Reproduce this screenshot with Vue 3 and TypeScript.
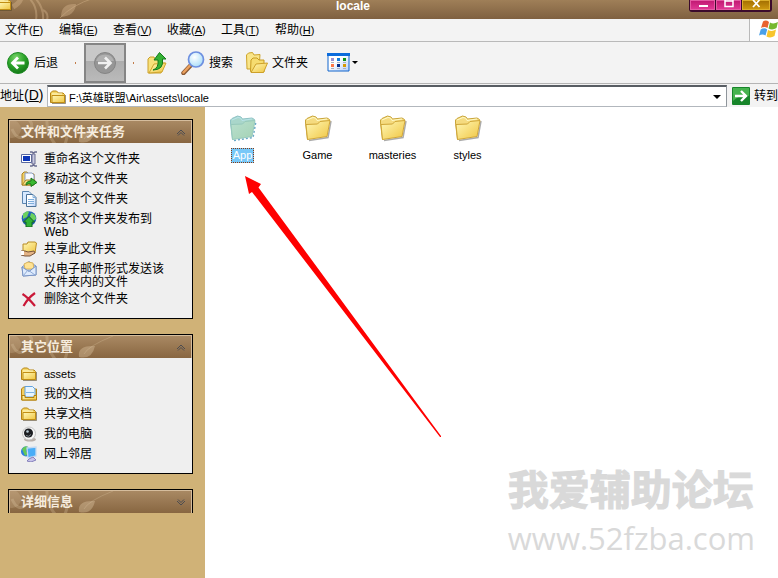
<script setup lang="ts">
import { ref } from 'vue'

interface Entry { icon: string; label: string }
interface Panel { title: string; open: boolean; entries: Entry[] }

const menus: [string, string][] = [
  ['文件', 'F'], ['编辑', 'E'], ['查看', 'V'], ['收藏', 'A'], ['工具', 'T'], ['帮助', 'H'],
]

const panels = ref<Panel[]>([
  {
    title: '文件和文件夹任务',
    open: true,
    entries: [
      { icon: 'rename', label: '重命名这个文件夹' },
      { icon: 'move', label: '移动这个文件夹' },
      { icon: 'copy', label: '复制这个文件夹' },
      { icon: 'publish', label: '将这个文件夹发布到 Web' },
      { icon: 'share', label: '共享此文件夹' },
      { icon: 'mail', label: '以电子邮件形式发送该文件夹内的文件' },
      { icon: 'delete', label: '删除这个文件夹' },
    ],
  },
  {
    title: '其它位置',
    open: true,
    entries: [
      { icon: 'folder', label: 'assets' },
      { icon: 'docs', label: '我的文档' },
      { icon: 'folder', label: '共享文档' },
      { icon: 'computer', label: '我的电脑' },
      { icon: 'network', label: '网上邻居' },
    ],
  },
  { title: '详细信息', open: false, entries: [] },
])

const folders = ['App', 'Game', 'masteries', 'styles']
const selected = ref('App')
const path = ref('F:\\英雄联盟\\Air\\assets\\locale')

const isLatin = (label: string) => /^[a-z]+$/i.test(label)
</script>

<template>
  <div class="window">
    <svg class="defs" width="0" height="0" aria-hidden="true">
      <defs>
        <linearGradient id="gold" x1="0" y1="0" x2="1" y2="1">
          <stop offset="0" stop-color="#fff8b8" /><stop offset="1" stop-color="#f0c540" />
        </linearGradient>
        <linearGradient id="teal" x1="0" y1="0" x2="1" y2="1">
          <stop offset="0" stop-color="#b9e0cf" /><stop offset="1" stop-color="#a4d2b4" />
        </linearGradient>
        <radialGradient id="green" cx=".4" cy=".25" r=".8">
          <stop offset="0" stop-color="#7bd46c" /><stop offset=".5" stop-color="#2ca52a" /><stop offset="1" stop-color="#117315" />
        </radialGradient>
        <radialGradient id="lens" cx=".4" cy=".35" r=".7">
          <stop offset="0" stop-color="#ffffff" /><stop offset="1" stop-color="#a5dcf8" />
        </radialGradient>
        <linearGradient id="sheet" x1="0" y1="0" x2="1" y2="1">
          <stop offset=".4" stop-color="#ffffff" /><stop offset="1" stop-color="#b5d0fa" />
        </linearGradient>
        <symbol id="small-folder" viewBox="0 0 16 16">
          <path d="M2 14.500h13.500V6" fill="none" stroke="#5a4a28" stroke-opacity=".6" />
          <path d="M.5 13.500V4l2-2h4l2 2H13l1.500 1.500v8z" fill="#f6d768" stroke="#b58412" />
          <path d="M2 6.500h12.500v7H2z" fill="url(#gold)" stroke="#c18e14" />
          <path d="M2 5h10" stroke="#fffbd0" />
        </symbol>
        <symbol id="big-folder" viewBox="0 0 28 28">
          <path d="M5 25.500l19-3L27 6" fill="none" stroke="#444" stroke-opacity=".45" stroke-width="1.500" />
          <path d="M3.500 24.500L1.500 8V5L3 3.500 8.500 1l3.500 1 1.500 2L23 3l2.500 1.500V6z" fill="#f5db80" stroke="#c9a53a" />
          <path d="M3 5l6-2.500 2.500.500 1.500 2.500 10-1.500" fill="none" stroke="#fffac8" />
          <path d="M3.500 24.500L2 9.500l11.500-.500L16 6.500l10-1-3 16z" fill="url(#gold)" stroke="#d0a637" />
        </symbol>
        <symbol id="big-folder-selected" viewBox="0 0 28 28">
          <path d="M5 25.500l19-3L27 6" fill="none" stroke="#6ba9c8" stroke-dasharray="2 2" stroke-width="1.500" />
          <path d="M3.500 24.500L1.500 8V5L3 3.500 8.500 1l3.500 1 1.500 2L23 3l2.500 1.500V6z" fill="#a9d6ca" stroke="#8fc3c6" />
          <path d="M3 5l6-2.500 2.500.500 1.500 2.500 10-1.500" fill="none" stroke="#b8e4ea" />
          <path d="M3.500 24.500L2 9.500l11.500-.500L16 6.500l10-1-3 16z" fill="url(#teal)" stroke="#97c9bb" />
        </symbol>
        <symbol id="swirl" viewBox="0 0 130 22">
          <g fill="none" stroke="#e9d2b0" stroke-opacity=".25" stroke-width="3">
            <path d="M2 8q6 14 15 5t1-15M37-2q-1 14 8 25M52 4q8 8 3 19" />
            <path d="M74 18q4-8 29-18" stroke-width="1" />
          </g>
          <path d="M69 21q-2-12 16-11-3 14-16 11z" fill="#e9d2b0" fill-opacity=".35" />
          <circle cx="2" cy="8" r="9" fill="#e9d2b0" fill-opacity=".2" />
        </symbol>
      </defs>
    </svg>

    <header class="title-bar">
      <svg class="title-art" viewBox="0 0 130 19" aria-hidden="true">
        <g fill="none" stroke="#d9b991" stroke-opacity=".4">
          <path d="M13 7Q20 3 21-2" stroke-width="5" />
          <path d="M30-1q8 9 6 21M36-1q8 9 7 21M47 20q2-7-4-10" stroke-width="2" />
          <path d="M60 18Q72 5 94-2" />
        </g>
        <path d="M61 17q0-14 15-13-1 12-15 13z" fill="#d9b991" fill-opacity=".4" />
      </svg>
      <svg class="title-icon" viewBox="0 0 16 16" aria-hidden="true"><use href="#small-folder" /></svg>
      <h1>locale</h1>
      <div class="window-buttons">
        <button aria-label="最小化"><svg viewBox="0 0 12 12"><path d="M2 6h9" stroke="#fff" stroke-width="2" /></svg></button>
        <button aria-label="最大化"><svg viewBox="0 0 12 12"><path d="M2 0v6.500h8V0M2 1h8" fill="none" stroke="#fff" stroke-width="1.500" /></svg></button>
        <button class="close" aria-label="关闭"><svg viewBox="0 0 12 12"><path d="M3 0l6.500 7M9.500 0L3 7" stroke="#fff" stroke-width="1.800" /></svg></button>
      </div>
    </header>

    <nav class="menu-bar">
      <button v-for="[label, key] in menus" :key="key">{{ label }}<span class="latin">(<u>{{ key }}</u>)</span></button>
      <span class="brand">
        <svg viewBox="0 0 20 20" aria-hidden="true">
          <path d="M5 2.500q3-2 6 .500L9.500 9q-3-2-6.500 0z" fill="#e8622f" />
          <path d="M12 3.500q3.500 2 8-.500L18.500 9q-4 2.500-8 .500z" fill="#76b82f" />
          <path d="M2.700 10.500q3.500-2.500 6.500 0L7.500 16.500q-3-2-6.500 0z" fill="#4aa0e8" />
          <path d="M10 11q4 2 8-.500L16.500 17q-4 2.500-8 .500z" fill="#f8c52c" />
        </svg>
      </span>
    </nav>

    <div class="tool-bar">
      <button class="tool">
        <svg class="i24" viewBox="0 0 24 24" aria-hidden="true">
          <circle cx="12" cy="12" r="10.500" fill="url(#green)" stroke="#1d8a23" />
          <path d="M18.500 12H7M12 6.500L6.500 12l5.500 5.500" fill="none" stroke="#fff" stroke-width="2.800" />
        </svg>后退
      </button>
      <i class="dot"></i>
      <button class="forward" aria-label="前进">
        <svg class="i24" viewBox="0 0 24 24" aria-hidden="true">
          <circle cx="12" cy="12" r="10.500" fill="#969696" stroke="#858585" />
          <path d="M3 10a9.500 9.500 0 0 1 18 0z" fill="#b0b0b0" />
          <path d="M5 12h12M12 6.500l5.500 5.500-5.500 5.500" fill="none" stroke="#f0f0f0" stroke-width="2.600" />
        </svg>
      </button>
      <i class="dot"></i>
      <button class="tool up" aria-label="向上">
        <svg class="i22" viewBox="0 0 22 24" aria-hidden="true">
          <path d="M2 22V8l2-2h4l1 2h7v4h3l-4 10z" fill="#f8e17a" stroke="#caa02a" />
          <path d="M3 22l5-9 12-1-4 9z" fill="url(#gold)" stroke="#d0a52e" />
          <path d="M7 19q6-2 5-10H8l5.500-7.500L20 8h-3.500Q18 19 7 19z" fill="#35b235" stroke="#147a1c" />
        </svg>
      </button>
      <button class="tool">
        <svg class="i24" viewBox="0 0 24 24" aria-hidden="true">
          <path d="M10 14l-7.500 8" stroke="#8b5a36" stroke-width="4.500" stroke-linecap="round" />
          <path d="M9.500 14l-7 7.500" stroke="#eca15d" stroke-width="2.500" stroke-linecap="round" />
          <circle cx="15" cy="8.500" r="7.500" fill="url(#lens)" stroke="#6d8fe0" stroke-width="1.700" />
        </svg>搜索
      </button>
      <button class="tool">
        <svg class="i22" viewBox="0 0 22 24" aria-hidden="true">
          <path d="M1 18L.5 4l2-2 4-.5L8 4l6-.5L13 18z" fill="#f9e589" stroke="#cda32b" />
          <path d="M4.500 20.500L5 9l2-2h4l2 2h5v12z" fill="#f6dc70" stroke="#c89b20" />
          <path d="M5 21.500l5-8.500 11.500-1-4 9.500z" fill="url(#gold)" stroke="#cda02a" />
        </svg>文件夹
      </button>
      <button class="tool views" aria-label="查看方式">
        <svg class="i24" viewBox="0 0 24 20" aria-hidden="true">
          <path d="M1 1h21v17H1z" fill="url(#sheet)" stroke="#1165cc" />
          <path d="M0 0h23v3H0z" fill="#0a6bdc" />
          <path d="M4 5h3v3H4z" fill="#9a8fd0" /><path d="M10 5h3v3h-3z" fill="#147edc" /><path d="M16 5h3v3h-3z" fill="#10921c" />
          <path d="M4 11h3v3H4z" fill="#ff7846" /><path d="M10 11h3v3h-3z" fill="#09318d" /><path d="M16 11h3v3h-3z" fill="#d69a05" />
          <path d="M4 9.500h3m3 0h3m3 0h3M4 15.500h3m3 0h3m3 0h3" stroke="#aab0bc" />
        </svg>
        <i class="caret"></i>
      </button>
    </div>

    <form class="address-bar" @submit.prevent>
      <label for="path">地址<span>(<u>D</u>)</span></label>
      <div class="combo">
        <svg class="i16" aria-hidden="true"><use href="#small-folder" /></svg>
        <input id="path" v-model="path" type="text" spellcheck="false" />
        <button class="drop" type="button" aria-label="展开"><i class="caret large"></i></button>
      </div>
      <button class="go" type="submit">
        <svg viewBox="0 0 18 18" aria-hidden="true">
          <rect width="18" height="18" rx="1" fill="#17852a" /><path d="M1 1h16v8Q9 7 1 14z" fill="#46b34e" />
          <path d="M3 9h11M9 4l5 5-5 5" fill="none" stroke="#fff" stroke-width="2.400" />
        </svg>转到
      </button>
    </form>

    <div class="body">
      <aside>
        <section v-for="panel in panels" :key="panel.title" class="panel" :class="{ closed: !panel.open }">
          <button class="panel-head" :aria-expanded="panel.open" @click="panel.open = !panel.open">
            <svg class="swirl" aria-hidden="true"><use href="#swirl" /></svg>
            <span>{{ panel.title }}</span>
            <svg class="chevron" viewBox="0 0 10 7" aria-hidden="true">
              <path :d="panel.open ? 'M1 5l4-4 4 4M2 6.500l3-3 3 3' : 'M1 2l4 4 4-4M2 .5l3 3 3-3'" fill="none" stroke="#4c4c50" />
            </svg>
          </button>
          <ul v-if="panel.open">
            <li v-for="entry in panel.entries" :key="entry.label">
              <a href="#">
                <svg class="i16" viewBox="0 0 16 16" aria-hidden="true">
                  <g v-if="entry.icon === 'rename'">
                    <path d="M.5 3.500h10v8H.5z" fill="#fff" stroke="#5868a0" /><path d="M2 5h7v5H2z" fill="#0c35b8" />
                    <path d="M9 1h2l1.500 1L14 1h2M12.500 1v14M9 15h2l1.500-1 1.500 1h2" fill="none" stroke="#6a6d91" stroke-width="1.500" />
                    <path d="M11 3h3v10h-3z" fill="#c9cbe2" stroke="#6a6d91" />
                  </g>
                  <g v-else-if="entry.icon === 'move'">
                    <path d="M1 14V3l2-2h3l2 2h5v11z" fill="#f3cf62" stroke="#ab8325" />
                    <path d="M4 2h7l2 2v8H4z" fill="#f7faff" stroke="#8b9cc0" /><path d="M1 14l4-5h9l-2 5z" fill="url(#gold)" stroke="#ab8325" />
                    <path d="M5 14q0-4 5-4V7l6 4.500-6 4V13q-3-1-5 1z" fill="#38b82f" stroke="#17731b" />
                  </g>
                  <g v-else-if="entry.icon === 'copy'">
                    <path d="M1.500 .5H8l3 3v9H1.500z" fill="#d7e9ff" stroke="#5c86b0" />
                    <path d="M5.500 3.500H12l3 3v9H5.500z" fill="url(#sheet)" stroke="#4c7298" />
                    <path d="M12 3.500v3h3M7 8.500h6m-6 2h6m-6 2h6" fill="none" stroke="#7faedb" />
                  </g>
                  <g v-else-if="entry.icon === 'publish'">
                    <circle cx="8" cy="7.500" r="7.300" fill="#2361b8" /><path d="M2 3q4-4 6-2l-2 5-4 2zM10 2q5 1 5 6l-3 2-3-4z" fill="#6bd15e" />
                    <path d="M8 5.500l5.500 5.500H11v5H5v-5H2.500z" fill="#31b336" stroke="#15661f" />
                  </g>
                  <g v-else-if="entry.icon === 'share'">
                    <path d="M2 11V3h4l1-2h7l1.500 1L14 12z" fill="url(#gold)" stroke="#b88c25" />
                    <path d="M0 10h4l3 1 6-1 1 2-5 3H4l-4-1z" fill="#e4b486" stroke="#76543c" /><path d="M0 10h3v4H0z" fill="#fff" />
                  </g>
                  <g v-else-if="entry.icon === 'mail'">
                    <path d="M1 6l7-5.500L15 5v9l-13 1z" fill="#b4cdf0" stroke="#7c96c4" />
                    <path d="M3 3l4-2 5 1 1 6H4z" fill="#ffe394" stroke="#d9b35c" />
                    <path d="M1 6l7 4.500L15 5v9L2 15z" fill="#deebfd" stroke="#7994c4" /><path d="M2 15l5-6 7 5" fill="none" stroke="#8eaad6" />
                  </g>
                  <path v-else-if="entry.icon === 'delete'" d="M1.500 3q5 3 12.500 12M14 2Q7 7 2.500 15" fill="none" stroke="#ca1838" stroke-width="2.200" />
                  <use v-else-if="entry.icon === 'folder'" href="#small-folder" />
                  <g v-else-if="entry.icon === 'docs'">
                    <path d="M.5 14V3l2-2H5l1 2h9.500v11z" fill="#f3cd5c" stroke="#b5830f" />
                    <path d="M4 .5h7.500L14 3v8H4z" fill="#e7f5ff" stroke="#61a2de" /><path d="M5 6.500h8" stroke="#81b6e5" />
                    <path d="M1 9.500h3v2h9v-2h2.500V14H1z" fill="url(#gold)" stroke="#b5830f" />
                  </g>
                  <g v-else-if="entry.icon === 'computer'">
                    <ellipse cx="9" cy="13.500" rx="6" ry="2" fill="#b8aea8" /><circle cx="8" cy="7.500" r="6.500" fill="#f5f5f5" stroke="#c4c4c4" />
                    <circle cx="7.500" cy="7" r="4.500" fill="#1c1e22" /><circle cx="6.500" cy="5.500" r="1.300" fill="#b6c8d3" /><path d="M5 9.500q3 2 5-1" fill="none" stroke="#7e8890" />
                  </g>
                  <g v-else>
                    <circle cx="5" cy="5.500" r="5" fill="#2c7de0" /><path d="M1 3q3-4 6-2L5 5l2 3-3 2z" fill="#63c957" />
                    <path d="M6 2l9-1v9l-8 2z" fill="#49adf7" stroke="#c4d9f2" stroke-width="1.300" /><path d="M8 13l4-2 3 3-5 2-4-1z" fill="#c8c4eb" stroke="#8580bb" />
                  </g>
                </svg>
                <span :class="{ latin: isLatin(entry.label) }">{{ entry.label }}</span>
              </a>
            </li>
          </ul>
        </section>
      </aside>

      <main>
        <div class="files">
          <button v-for="name in folders" :key="name" class="file" :class="{ selected: name === selected }" @click="selected = name">
            <svg aria-hidden="true"><use :href="name === selected ? '#big-folder-selected' : '#big-folder'" /></svg>
            <span class="latin">{{ name }}</span>
          </button>
        </div>
        <svg class="arrow" viewBox="0 0 197 262" aria-hidden="true">
          <path d="M0 0l16 8-2.500 3.500L196 260v1h-1L7 16l-3 2z" fill="#fe0000" />
        </svg>
        <div class="watermark">
          <p class="forum">我爱辅助论坛</p>
          <p class="site">www.52fzba.com</p>
        </div>
      </main>
    </div>
  </div>
</template>

<style>
body { margin: 0; }
#app { min-height: 100vh; display: flex; }
</style>

<style scoped>
.window { flex: 1; min-width: 0; display: flex; flex-direction: column; overflow: hidden; background: #f3f3f3; color: #000; font: 12px/16px "Liberation Sans", "Noto Sans CJK SC", sans-serif; }
.latin { font-size: 11px; }
.defs { position: absolute; }
svg { display: block; flex: none; }
button { border: 0; margin: 0; padding: 0; background: none; color: inherit; font: inherit; white-space: nowrap; }
.i16 { width: 16px; height: 16px; }
.i22 { width: 22px; height: 24px; }
.i24 { width: 24px; height: 24px; }

.title-bar { position: relative; height: 19px; background: linear-gradient(#9f7f58, #7f6040); }
.title-art { position: absolute; left: 0; top: 0; width: 130px; height: 19px; }
.title-icon { position: absolute; left: -4px; top: -4px; width: 16px; height: 16px; }
h1 { margin: 0; padding-right: 72px; text-align: center; font-size: 12px; line-height: 13px; color: #fff; }
.window-buttons { position: absolute; right: 6px; top: 0; display: flex; gap: 1px; padding: 0 2px 2px 1px; background: #3b0a2c; border-radius: 0 0 3px 3px; }
.window-buttons button { width: 25px; height: 10px; display: flex; justify-content: center; background: linear-gradient(#bf1770, #e23a96); box-shadow: inset 0 0 0 1px #e45ca4; }
.window-buttons .close { width: 28px; background: linear-gradient(#a06c00, #d09a10); box-shadow: inset 0 0 0 1px #dcae2c; }
.window-buttons svg { width: 12px; height: 12px; }

.menu-bar { display: flex; height: 22px; padding-left: 5px; border-bottom: 1px solid #b9b9b9; }
.menu-bar button { width: 54px; text-align: left; line-height: 22px; }
.brand { margin-left: auto; width: 20px; padding-left: 8px; border-left: 1px solid #b9b9b9; background: #fff; }
.brand svg { width: 20px; height: 20px; }

.tool-bar { display: flex; align-items: center; height: 41px; padding-left: 6px; border-bottom: 1px solid #b4b4b4; }
.tool { display: flex; align-items: center; gap: 4px; margin-right: 13px; }
.dot { width: 2px; height: 2px; margin: 0 7px 0 4px; background: linear-gradient(90deg, #c27c4a 50%, transparent 50%); }
.forward { display: flex; align-items: center; justify-content: center; width: 42px; height: 40px; margin-right: 3px; border: 2px solid #858585; background: linear-gradient(#c8c8c8 45%, #adadad 45%, #bababa); }
.up { margin-left: 4px; }
.views { margin-left: 6px; gap: 1px; }
.views .i24 { height: 20px; }
.caret { width: 0; height: 0; border: 3px solid transparent; border-top-color: #000; border-bottom: 0; }
.caret.large { border-width: 4px 4px 0; }

.address-bar { display: flex; align-items: center; height: 23px; }
.address-bar label { width: 47px; white-space: nowrap; }
.address-bar label span { font-size: 14px; }
.combo { flex: 1; min-width: 0; display: flex; align-items: center; height: 19px; margin-top: 1px; padding: 0 5px 0 2px; background: #fff; border: 1px solid #b2b7bd; border-top: 2px solid #585d63; border-right-color: #8f959b; }
.combo input { flex: 1; min-width: 0; height: 18px; margin: 0 0 0 3px; padding: 0; border: 0; outline: 0; background: none; color: #000; font: inherit; font-size: 11px; }
.drop { display: flex; align-items: center; height: 18px; }
.go { display: flex; align-items: center; gap: 4px; margin-left: 5px; }
.go svg { width: 18px; height: 18px; }

.body { flex: 1; display: flex; }
aside { width: 185px; padding: 12px 12px 0 8px; background: #d0b277; }
.panel { margin-bottom: 15px; border: 1px solid #000; background: #efefef; }
.panel.closed { border-bottom: 0; }
.panel-head { position: relative; display: flex; align-items: center; justify-content: space-between; width: 100%; height: 23px; padding: 0 5px 0 11px; border: 1px solid #d5bd9d; border-width: 1px 1px 0; overflow: hidden; background: linear-gradient(#a98963, #886641); color: #f6ecde; font-size: 13px; line-height: 20px; font-weight: 700; }
.panel-head span { position: relative; }
.swirl { position: absolute; left: 0; top: 0; width: 130px; height: 22px; }
.chevron { width: 10px; height: 7px; }
ul { display: flex; flex-direction: column; gap: 4px; margin: 0; padding: 8px 12px 11px; list-style: none; }
li a { display: flex; gap: 7px; color: #000; text-decoration: none; line-height: 13px; }
li span { padding-top: 2px; max-width: 121px; margin-bottom: -2px; }

main { position: relative; flex: 1; min-width: 0; background: #fff; }
.files { display: flex; flex-wrap: wrap; padding: 8px 0; }
.file { display: flex; flex-direction: column; align-items: center; gap: 5px; width: 75px; }
.file svg { width: 28px; height: 28px; }
.file span { padding: 0 2px; line-height: 15px; }
.file.selected span { color: #fff; background: #78c8f8; outline: 1px dotted #863c16; outline-offset: -1px; }
.arrow { position: absolute; left: 40px; top: 69px; width: 197px; height: 262px; }
.watermark { position: absolute; right: 23px; bottom: 17px; color: #d9d9d9; white-space: nowrap; }
.watermark p { margin: 0; }
.forum { font: 700 41px/56px "Noto Sans CJK SC", sans-serif; -webkit-text-stroke: 1px #d9d9d9; }
.site { font: 31px/46px "Open Sans", sans-serif; }
</style>
